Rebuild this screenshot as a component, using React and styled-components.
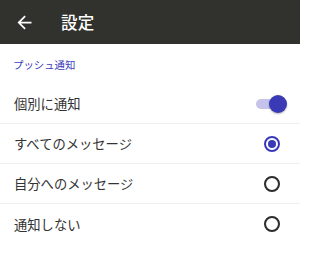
import React, { useState } from 'react';
import styled, { createGlobalStyle } from 'styled-components';

const GlobalStyle = createGlobalStyle`
    html, body {
        margin: 0;
        padding: 0;
        background: #ffffff;
    }
    body {
        font-family: "Roboto", "Noto Sans CJK JP", sans-serif;
    }
`;

const accent = '#3a3ab6';

const Page = styled.div`
    width: 300px;
    height: 257px;
    background: #fff;
    overflow: hidden;
`;

const AppBar = styled.header`
    height: 44px;
    display: flex;
    align-items: center;
    padding-left: 14px;
    gap: 26px;
    background: #31312d;
    color: #fff;
`;

const BackButton = styled.button`
    display: flex;
    padding: 0;
    border: 0;
    background: none;
    color: inherit;
    svg {
        width: 21px;
        height: 21px;
        fill: currentColor;
    }
`;

const Title = styled.h1`
    margin: 0;
    font-size: 16.5px;
    font-weight: 500;
    letter-spacing: 0.3px;
`;

const SectionLabel = styled.div`
    height: 40px;
    box-sizing: border-box;
    padding: 15px 13px 0;
    font-size: 10.4px;
    line-height: 14px;
    color: #3d3dbb;
`;

const Row = styled.label`
    height: 40px;
    box-sizing: border-box;
    display: flex;
    align-items: center;
    justify-content: space-between;
    padding: 0 13px 0 14px;
    border-bottom: ${({ last }) => (last ? 'none' : '1.5px solid #eeeeee')};
    font-size: 13.3px;
    color: #333;
    cursor: pointer;
`;

const Control = styled.span`
    width: 31px;
    display: flex;
    justify-content: center;
    align-items: center;
`;

const Switch = styled.span`
    position: relative;
    width: 31px;
    height: 18px;
    display: flex;
    align-items: center;
`;

const Track = styled.span`
    width: 27px;
    height: 10px;
    border-radius: 5px;
    background: ${({ on }) => (on ? '#c3c3eb' : '#bdbdbd')};
`;

const Thumb = styled.span`
    position: absolute;
    top: 0;
    left: ${({ on }) => (on ? '13px' : '0')};
    width: 18px;
    height: 18px;
    border-radius: 50%;
    background: ${({ on }) => (on ? accent : '#fafafa')};
    box-shadow: 0 1px 2px rgba(0, 0, 0, 0.3);
`;

const Radio = styled.span`
    width: 16px;
    height: 16px;
    box-sizing: border-box;
    border-radius: 50%;
    border: 2px solid ${({ checked }) => (checked ? accent : '#2b2b2b')};
    display: flex;
    align-items: center;
    justify-content: center;
    &::after {
        content: '';
        width: 8px;
        height: 8px;
        border-radius: 50%;
        background: ${({ checked }) => (checked ? accent : 'transparent')};
    }
`;

const options = [
    { id: 'all', label: 'すべてのメッセージ' },
    { id: 'mine', label: '自分へのメッセージ' },
    { id: 'none', label: '通知しない' },
];

const App = () => {
    const [individual, setIndividual] = useState(true);
    const [selected, setSelected] = useState('all');

    return (
        <Page>
            <GlobalStyle />
            <AppBar>
                <BackButton aria-label="戻る">
                    <svg viewBox="0 0 24 24">
                        <path d="M20 11H7.83l5.59-5.59L12 4l-8 8 8 8 1.41-1.41L7.83 13H20v-2z" />
                    </svg>
                </BackButton>
                <Title>設定</Title>
            </AppBar>
            <SectionLabel>プッシュ通知</SectionLabel>
            <Row onClick={() => setIndividual(!individual)}>
                個別に通知
                <Control>
                    <Switch>
                        <Track on={individual ? 1 : 0} />
                        <Thumb on={individual ? 1 : 0} />
                    </Switch>
                </Control>
            </Row>
            {options.map((opt, i) => (
                <Row key={opt.id} last={i === options.length - 1 ? 1 : 0} onClick={() => setSelected(opt.id)}>
                    {opt.label}
                    <Control>
                        <Radio checked={selected === opt.id} />
                    </Control>
                </Row>
            ))}
        </Page>
    );
};

export default App;
